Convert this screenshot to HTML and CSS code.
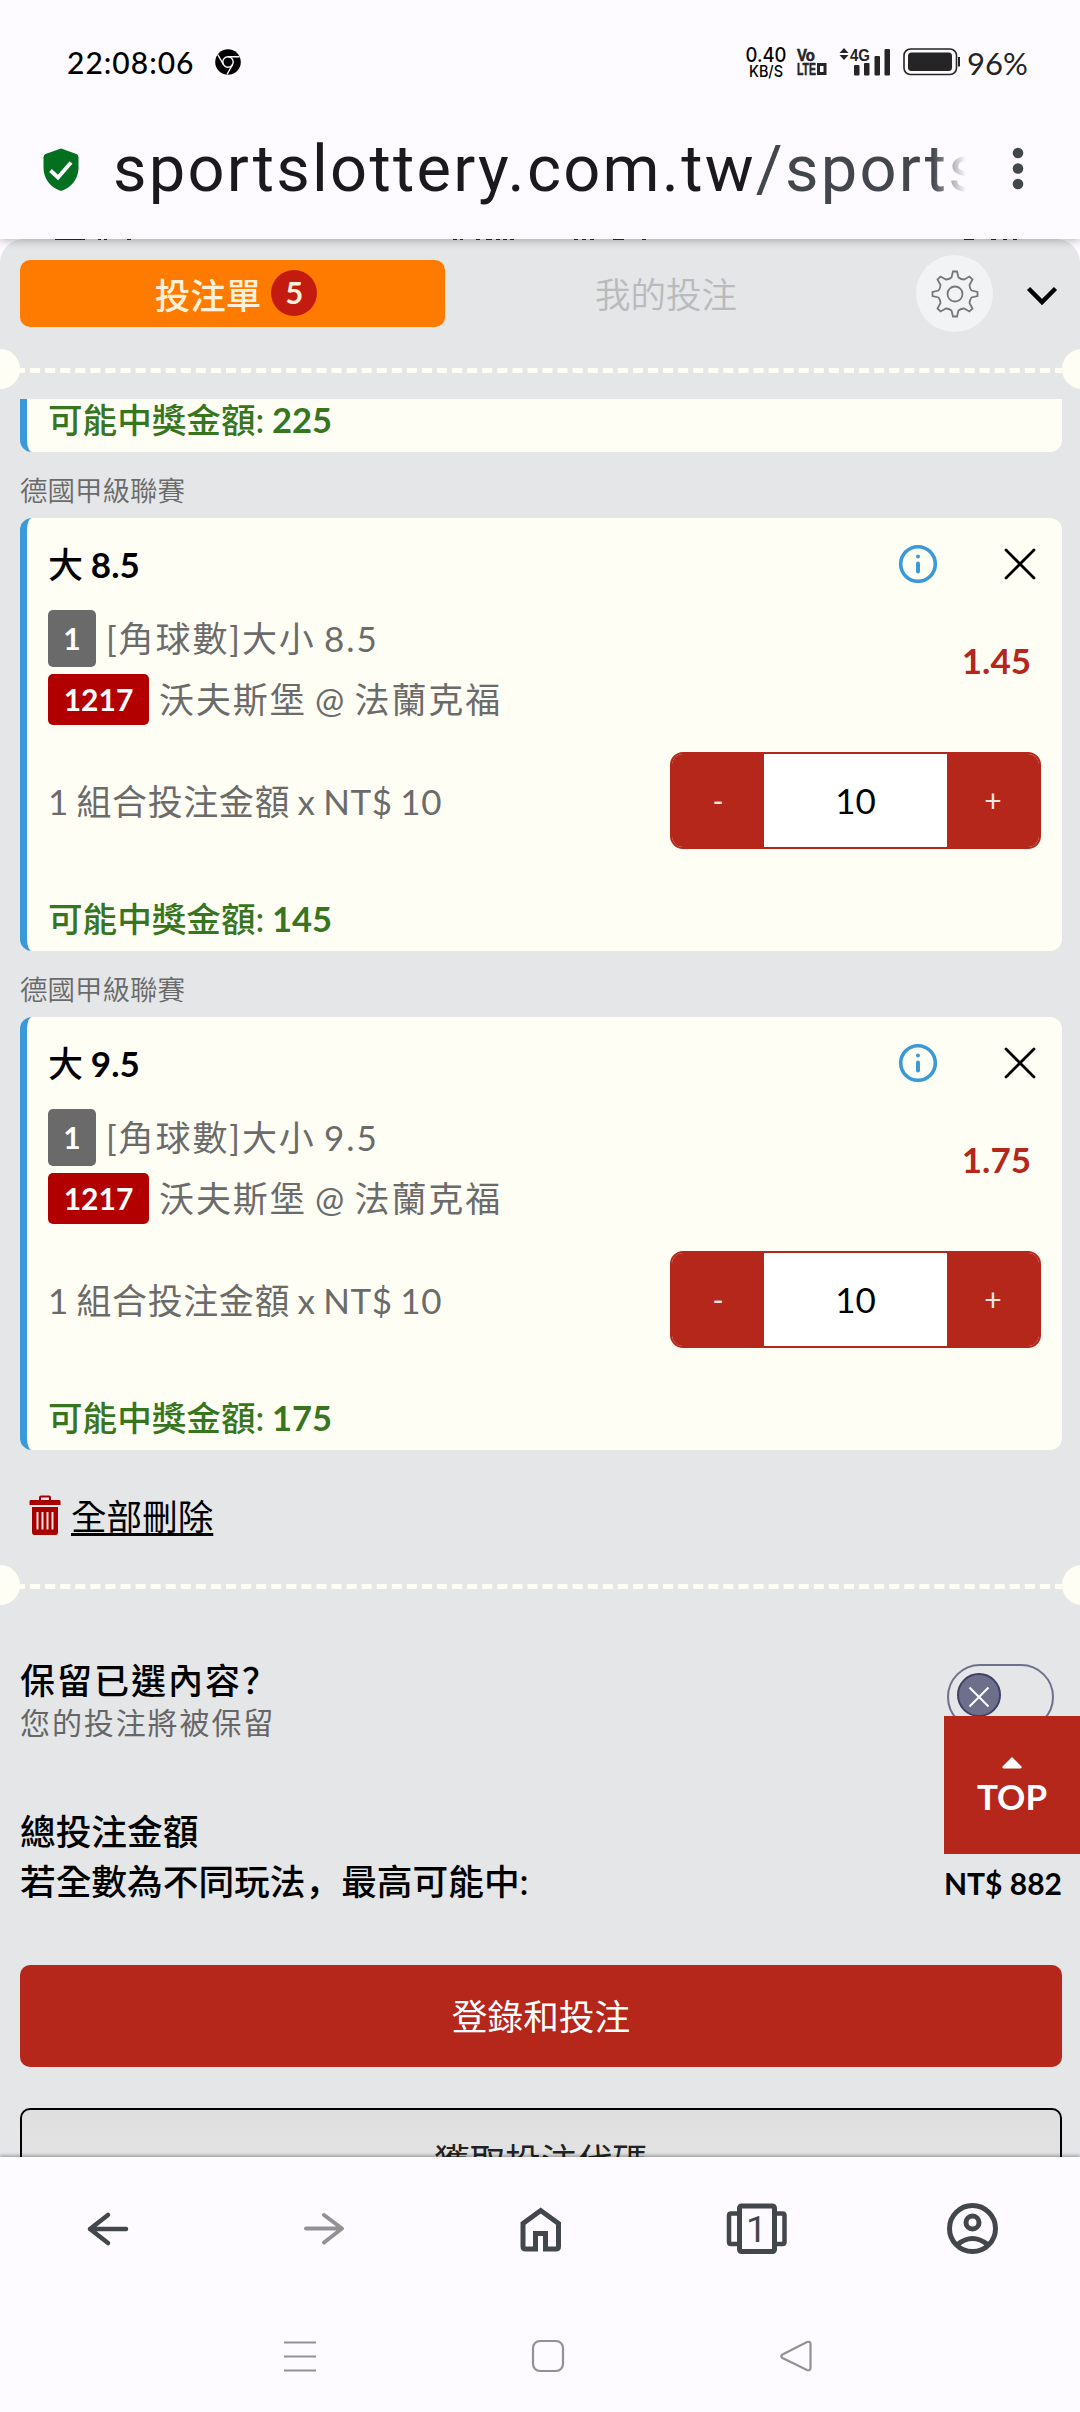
FILE: index.html
```html
<!DOCTYPE html>
<html lang="zh-Hant">
<head>
<meta charset="utf-8">
<title>投注單</title>
<link rel="stylesheet" href="styles.css">
</head>
<body>
<div class="phone">
  <header class="browser">
    <div class="status">
      <span class="clock">22:08:06</span>
      <svg class="chrome" viewBox="0 0 26 26"><circle cx="13" cy="13" r="12.8"/><g fill="none" stroke="#fdfbff" stroke-width="1.4"><circle cx="13" cy="13" r="5.2"/><path d="M13 7.8H24.5M8.5 15.6L2.7 5.5M17.5 15.6L12 25.5"/></g></svg>
      <div class="status-right">
        <svg class="speed" viewBox="0 0 42 32"><text x="20" y="14.500" font-size="19.500" textLength="41" lengthAdjust="spacingAndGlyphs">0.40</text><text x="20" y="29.500" font-size="15.500" textLength="34" lengthAdjust="spacingAndGlyphs">KB/S</text></svg>
        <svg class="volte" viewBox="0 0 33 28"><text x="0" y="13" textLength="18" lengthAdjust="spacingAndGlyphs">Vo</text><text x="0" y="27" textLength="19" lengthAdjust="spacingAndGlyphs">LTE</text><rect x="21.500" y="16.500" width="6.500" height="9" fill="none" stroke="#252525" stroke-width="3"/></svg>
        <svg class="signal" viewBox="0 0 52 28"><path d="M5 0l4.500 5h-9zM5 12l4.500-5h-9z"/><text x="11" y="13" textLength="20" lengthAdjust="spacingAndGlyphs">4G</text><rect x="15" y="17" width="5.500" height="10.500" rx="1"/><rect x="25" y="15" width="5.500" height="12.500" rx="1"/><rect x="35.500" y="8" width="5.500" height="19.500" rx="1"/><rect x="45.500" y="1" width="5.500" height="26.500" rx="1"/></svg>
        <svg class="battery" viewBox="0 0 58 28"><rect x="1" y="1" width="52.500" height="25.500" rx="6.500" fill="none" stroke="#252525" stroke-width="1.600"/><rect x="5" y="4.500" width="44" height="18.500" rx="3.500"/><rect x="55" y="9" width="2" height="9.500"/></svg>
        <span class="percent">96%</span>
      </div>
    </div>
    <div class="urlbar">
      <svg class="shield" viewBox="0 0 36 43"><path d="M18 .5L33.500 6Q35.500 7 35.500 9V20C35.500 31 28 40 18 43C8 40 .5 31 .5 20V9Q.5 7 2.500 6Z" fill="#03701f"/><path d="M7.500 22.500l7.500 7L28 14.500" fill="none" stroke="#fff" stroke-width="3.800"/></svg>
      <div class="url">sportslottery.com.tw<span>/sports</span></div>
      <svg class="dots" viewBox="0 0 12 44"><circle cx="6" cy="6" r="5.300"/><circle cx="6" cy="21.500" r="5.300"/><circle cx="6" cy="37" r="5.300"/></svg>
    </div>
    <svg class="peek" viewBox="0 0 1080 1"><path d="M55 .5H85M98 .5h3M104 .5h3M127 .5h4M453 .5h4M460 .5h3M476 .5h4M486 .5h6M496 .5h4M503 .5h4M510 .5h4M574 .5h4M582 .5h4M590 .5h4M613 .5h11M642 .5h4M964 .5h10M991 .5h5M1003 .5h4M1013 .5h4"/></svg>
  </header>

  <main class="sheet">
    <div class="tabs">
      <div class="tab tab-active">投注單<span class="count">5</span></div>
      <div class="tab tab-idle">我的投注</div>
      <div class="gear"><svg viewBox="0 0 48 48"><path d="M20.500 7.500L22 1.500H26L27.500 7.500Q30 9.500 33 9.500L38.500 6.500L41.500 9.500L38.500 15Q38.500 18 40.500 20.500L46.500 22V26L40.500 27.500Q38.500 30 38.500 33L41.500 38.500L38.500 41.500L33 38.500Q30 38.500 27.500 40.500L26 46.500H22L20.500 40.500Q18 38.500 15 38.500L9.500 41.500L6.500 38.500L9.500 33Q9.500 30 7.500 27.500L1.500 26V22L7.500 20.500Q9.500 18 9.500 15L6.500 9.500L9.500 6.500L15 9.500Q18 9.500 20.500 7.500Z"/><circle cx="24" cy="24" r="7.500"/></svg></div>
      <svg class="chevron" viewBox="0 0 30 18"><path d="M1.500 1.500L15 15L28.500 1.500"/></svg>
    </div>
    <div class="divider"></div>

    <section class="slips">
      <article class="card card-cut"><p class="win">可能中獎金額: <b>225</b></p></article>
      <h3 class="league">德國甲級聯賽</h3>
      <article class="card">
        <div class="card-head"><h4>大 <b>8.5</b></h4>
          <svg class="info" viewBox="0 0 38 38"><circle cx="19" cy="19" r="17.300"/><path d="M19 18.500v8" stroke-width="4" stroke-linecap="round"/><path d="M19 11.500v.1" stroke-width="4" stroke-linecap="round"/></svg>
          <svg class="close" viewBox="0 0 32 32"><path d="M2 2L30 30M30 2L2 30"/></svg></div>
        <div class="pick"><div>
          <p class="line"><b class="tag tag-grey">1</b><span>[角球數]大小 8.5</span></p>
          <p class="line"><b class="tag tag-red">1217</b><span>沃夫斯堡 @ 法蘭克福</span></p></div>
          <strong class="odds">1.45</strong></div>
        <div class="stake"><span>1 組合投注金額 x NT$ 10</span>
          <div class="stepper"><span class="step">-</span><span class="amount">10</span><span class="step">+</span></div></div>
        <p class="win">可能中獎金額: <b>145</b></p>
      </article>
      <h3 class="league">德國甲級聯賽</h3>
      <article class="card">
        <div class="card-head"><h4>大 <b>9.5</b></h4>
          <svg class="info" viewBox="0 0 38 38"><circle cx="19" cy="19" r="17.300"/><path d="M19 18.500v8" stroke-width="4" stroke-linecap="round"/><path d="M19 11.500v.1" stroke-width="4" stroke-linecap="round"/></svg>
          <svg class="close" viewBox="0 0 32 32"><path d="M2 2L30 30M30 2L2 30"/></svg></div>
        <div class="pick"><div>
          <p class="line"><b class="tag tag-grey">1</b><span>[角球數]大小 9.5</span></p>
          <p class="line"><b class="tag tag-red">1217</b><span>沃夫斯堡 @ 法蘭克福</span></p></div>
          <strong class="odds">1.75</strong></div>
        <div class="stake"><span>1 組合投注金額 x NT$ 10</span>
          <div class="stepper"><span class="step">-</span><span class="amount">10</span><span class="step">+</span></div></div>
        <p class="win">可能中獎金額: <b>175</b></p>
      </article>
    </section>

    <div class="remove">
      <svg class="trash" viewBox="0 0 32 40"><path d="M11 5V2.500Q11 1.500 12 1.500H20Q21 1.500 21 2.500V5" fill="none" stroke="#a80000" stroke-width="2"/><path d="M1.500 5H30.500Q31.500 5 31.500 6.500V10H.5V6.500Q.5 5 1.500 5ZM3 12H29V37Q29 40 26.500 40H5.500Q3 40 3 37Z"/><path d="M8.500 17v17.500M13.500 17v17.500M18.500 17v17.500M23.500 17v17.500" stroke="#f6e0e0" stroke-width="2"/></svg>
      <a>全部刪除</a>
    </div>
    <div class="divider"></div>

    <section class="summary">
      <div class="keep">
        <div><p class="keep-title">保留已選內容<span class="punct" lang="zh-Hans">？</span></p><p class="keep-note">您的投注將被保留</p></div>
        <div class="toggle"><svg viewBox="0 0 44 44"><circle cx="22" cy="22" r="21"/><path d="M12.500 14.500L31.500 33.500M31.500 14.500L12.500 33.500"/></svg></div>
      </div>
      <p class="total">總投注金額</p>
      <p class="total total-last"><span>若全數為不同玩法<span class="punct" lang="zh-Hans">，</span>最高可能中:</span><b>NT$ 882</b></p>
      <div class="btn btn-login">登錄和投注</div>
      <div class="btn btn-code">獲取投注代碼</div>
    </section>
    <div class="top-btn"><svg viewBox="0 0 20 12"><path d="M10 0L19.500 9.500Q20 11.500 18 11.500H2Q0 11.500 .5 9.500Z"/></svg>TOP</div>
  </main>

  <footer class="bottom">
    <nav class="toolbar">
      <svg viewBox="0 0 60 60"><path d="M48 30H12M30 16L12 30L30 44" stroke-linecap="round" stroke-linejoin="round" stroke-width="4.500"/></svg>
      <svg class="dim" viewBox="0 0 60 60"><path d="M12 29.500H47M30 16L48 29.500L30 43.500" stroke-linecap="round" stroke-linejoin="round" stroke-width="4"/></svg>
      <svg viewBox="0 0 60 60"><path d="M13 24.500L30.700 11.500L48.500 24.500V47.500Q48.500 50 46 50H35.500V34.500H25.500V50H15.500Q13 50 13 47.500Z" stroke-width="5"/></svg>
      <svg viewBox="0 0 60 60"><rect x="13.500" y="7" width="35" height="45.500" rx="2" stroke-width="5"/><path d="M13.500 14.500H5Q3 14.500 3 16.500V43Q3 45 5 45H13.500M48.500 14.500H56.500Q58.500 14.500 58.500 16.500V43Q58.500 45 56.500 45H48.500" stroke-width="4.500"/><text x="30.500" y="42.500">1</text></svg>
      <svg viewBox="0 0 60 60"><circle cx="30.500" cy="29.500" r="23" stroke-width="5"/><circle cx="30.500" cy="23.500" r="6.500" stroke-width="5"/><path d="M15.500 45.500Q30.500 33.500 45.500 45.500" stroke-width="5"/></svg>
    </nav>
    <nav class="system">
      <svg viewBox="0 0 32 32"><path d="M0 2.500H32M0 16.500H32M0 30.500H32"/></svg>
      <svg viewBox="0 0 32 32"><rect x="1" y="1" width="30" height="30" rx="7"/></svg>
      <svg viewBox="0 0 32 32"><path d="M2.500 14.500L27 2Q30.500 1 30.500 4V28Q30.500 31 27 30L2.500 18Q0 16.300 2.500 14.500Z"/></svg>
    </nav>
  </footer>
</div>
</body>
</html>
```
FILE: styles.css
```css
* { box-sizing: border-box; }
body { margin: 0; background: #fdfbff; font-family: Lato, "Noto Sans CJK TC", sans-serif; }
p, h3, h4 { margin: 0; font-weight: 400; }
svg { display: block; flex: none; overflow: visible; }
.phone { width: 1080px; height: 2412px; overflow: hidden; display: flex; flex-direction: column; }

.browser { height: 239px; flex: none; background: #fdfbff; position: relative; z-index: 2; box-shadow: 0 2px 8px rgba(0,0,0,.25); }
.peek { position: absolute; left: 0; top: 239px; width: 1080px; height: 1px; stroke: #222; stroke-width: 1; }
.status { height: 124px; padding-left: 67px; padding-right: 52px; display: flex; align-items: center; }
.clock { font-size: 30px; font-weight: 500; width: 148px; letter-spacing: 1px; }
.chrome { width: 26px; height: 26px; }
.status-right { margin-left: auto; display: flex; align-items: center; color: #252525; fill: #252525; }
.speed { width: 42px; height: 32px; fill: #000; font-family: Inter, sans-serif; font-weight: 500; margin: 2px 9px 0 0; text-anchor: middle; }
.volte { width: 33px; height: 28px; margin-right: 9px; font: 700 17px "Liberation Sans", sans-serif; stroke: #252525; stroke-width: .6; }
.signal { width: 52px; height: 28px; margin-right: 12px; }
.signal text { font: 700 17px "Liberation Sans", sans-serif; }
.battery { width: 58px; height: 28px; margin-right: 6px; }
.percent { font-size: 31px; width: 61px; line-height: 30px; padding-top: 2px; }
.urlbar { height: 90px; display: flex; align-items: center; padding-left: 43px; }
.shield { width: 36px; height: 43px; }
.url { width: 856px; margin-left: 34px; overflow: hidden; white-space: nowrap; font: 400 65px/86px Roboto, sans-serif; letter-spacing: 2.250px; color: #1a1a1c; mask-image: linear-gradient(90deg, #000 820px, transparent 853px); }
.url span { color: #43464d; }
.dots { width: 12px; height: 44px; margin-left: 43px; fill: #43464d; }

.sheet { height: 1918px; flex: none; background: #e4e6e8; border-radius: 24px 24px 0 0; position: relative; overflow: hidden; }
.tabs { height: 109px; padding: 21px 23px 0 20px; display: flex; align-items: flex-start; }
.tab { height: 67px; display: flex; align-items: center; justify-content: center; font-size: 35.500px; padding-bottom: 2px; }
.tab-active { width: 425px; background: #ff7b00; color: #fff1db; border-radius: 10px; padding: 0 0 1px 7px; font-weight: 500; }
.count { width: 46px; height: 46px; margin-left: 10px; border-radius: 50%; background: #c41b10; color: #fff1db; font-size: 31px; font-weight: 700; line-height: 45px; text-align: center; }
.tab-idle { width: 442px; color: #b8babb; font-weight: 350; }
.gear { width: 77px; height: 77px; margin: -5px 34px 0 29px; border-radius: 50%; background: #f1f3f5; display: grid; place-items: center; }
.gear svg { width: 48px; height: 48px; fill: none; stroke: #777; stroke-width: 1.800; }
.chevron { width: 30px; height: 18px; margin-top: 27px; fill: none; stroke: #000; stroke-width: 4.500; }
.divider { height: 41px; position: relative; display: flex; align-items: center; padding: 4px 15px 0; }
.divider::before { content: ""; flex: 1; border-top: 5px dashed #fffef4; }
.divider::after { content: ""; position: absolute; inset: 0 -22px 0 -20px; background: radial-gradient(circle at 20px 20px, #fffef4 19.500px, transparent 20.500px) left / 40px 40px no-repeat, radial-gradient(circle at 20px 20px, #fffef4 19.500px, transparent 20.500px) right / 40px 40px no-repeat; }

.slips { margin: 10px 18px 0 20px; }
.card { height: 433px; background: #fffef5; border-left: 7px solid #3a99d9; border-radius: 12px; padding: 20px 21px 0 21px; }
.card-cut { height: 53px; border-radius: 0 0 12px 12px; padding-top: 0; }
.card .win { font-weight: 500; }
.card-cut .win { margin-top: 0; line-height: 42px; }
.league { height: 66px; padding-top: 13px; font-size: 27.500px; line-height: 52px; color: #6a6a6a; font-weight: 350; }
.card-head { display: flex; align-items: center; height: 52px; }
.card-head h4 { font-size: 35px; font-weight: 500; flex: 1; line-height: 52px; word-spacing: -1px; }
.info { width: 38px; height: 38px; margin-right: 67px; fill: none; stroke: #3a99d9; stroke-width: 3.600; }
.close { width: 32px; height: 32px; margin-right: 5px; fill: none; stroke: #000; stroke-width: 2.800; stroke-linecap: round; }
.pick { display: flex; justify-content: space-between; align-items: center; margin: 20px 10px 0 0; height: 115px; }
.pick > div { display: flex; flex-direction: column; gap: 7px; }
.line { display: flex; align-items: center; font-size: 35px; line-height: 48px; letter-spacing: 1.900px; word-spacing: -2.500px; color: #6b6b6b; }
.line span { margin-top: -2px; }
.line .tag { color: #fff; font-size: 30px; font-weight: 700; letter-spacing: 0; text-align: center; border-radius: 5px; margin-right: 10px; }
.tag-grey { width: 48px; height: 57px; line-height: 57px; background: #6a6a6a; }
.tag-red { width: 101px; height: 51px; line-height: 51px; background: #b20000; }
.odds { color: #b5261b; font-size: 35px; font-weight: 700; margin-top: -16px; }
.stake { display: flex; justify-content: space-between; align-items: center; margin-top: 27px; font-size: 35px; letter-spacing: .6px; word-spacing: -2px; color: #6b6b6b; }
.stake > span { margin-top: -2px; }
.stepper { width: 371px; height: 97px; border: 2px solid #b5261b; border-radius: 13px; display: flex; overflow: hidden; background: #fff; letter-spacing: 0; text-align: center; line-height: 93px; }
.step { width: 92px; background: #b5261b; color: #f7e6e2; font-size: 30px; }
.amount { flex: 1; color: #000; }
.win { margin-top: 45px; color: #37751f; font-size: 34.600px; line-height: 50px; word-spacing: -1px; }

.remove { height: 114px; display: flex; align-items: center; padding: 16px 0 0 29px; font-size: 35.600px; }
.trash { width: 32px; height: 40px; margin-right: 10px; fill: #a80000; }
.remove a { margin-top: -2px; text-decoration: underline; text-decoration-thickness: 3px; text-underline-offset: 3px; text-decoration-skip-ink: none; }

.summary { padding: 0 18px 0 20px; }
.punct { font-family: "Noto Sans CJK SC", sans-serif; line-height: 1; }
.keep { height: 202px; padding-top: 52px; display: flex; justify-content: space-between; }
.keep-title { font-size: 35px; letter-spacing: 2px; line-height: 46px; font-weight: 500; }
.keep-note { font-size: 30px; letter-spacing: 1.900px; line-height: 39px; color: #666; }
.toggle { width: 107px; height: 66px; margin: 7px 8px 0 0; padding: 7px 0 0 8px; border: 2px solid #6e718c; border-radius: 33px; }
.toggle svg { width: 44px; height: 44px; fill: #6e6f8b; stroke: #3f4065; stroke-width: 2; }
.toggle path { stroke: #fff; }
.total { display: flex; justify-content: space-between; font-size: 35.700px; line-height: 50px; font-weight: 500; }
.total b { font-size: 30px; font-weight: 700; padding-top: 1px; }
.total-last { height: 50px; margin-bottom: 58px; }
.btn { height: 102px; border-radius: 10px; text-align: center; font-size: 35.700px; line-height: 104px; }
.btn-login { background: #b5261b; color: #fff; }
.btn-code { margin-top: 41px; border: 2px solid #000; background: linear-gradient(#dfdfdf, #e6e6e6); color: #222; line-height: 102px; }
.top-btn { position: absolute; right: 0; top: 1477px; width: 136px; height: 138px; background: #b5261b; color: #fff; font-size: 35px; font-weight: 700; line-height: 40px; display: flex; flex-direction: column; align-items: center; padding-top: 41px; }
.top-btn svg { width: 20px; height: 12px; fill: #fff; margin-bottom: 7px; }

.bottom { height: 255px; flex: none; background: #fdfbff; position: relative; box-shadow: 0 -1px 4px rgba(0,0,0,.4); }
.toolbar { height: 143px; display: grid; grid-template-columns: repeat(5, 216px); justify-items: center; align-items: center; }
.toolbar svg { width: 60px; height: 60px; fill: none; stroke: #43464d; }
.toolbar .dim { stroke: #929292; }
.toolbar text { fill: #43464d; stroke: none; font: 400 37px Roboto, sans-serif; text-anchor: middle; }
.system { display: grid; grid-template-columns: 32px 32px 32px; justify-content: center; column-gap: 216px; padding: 40px 0 0 15px; }
.system svg { width: 32px; height: 32px; fill: none; stroke: #929292; stroke-width: 2.200; }
```
